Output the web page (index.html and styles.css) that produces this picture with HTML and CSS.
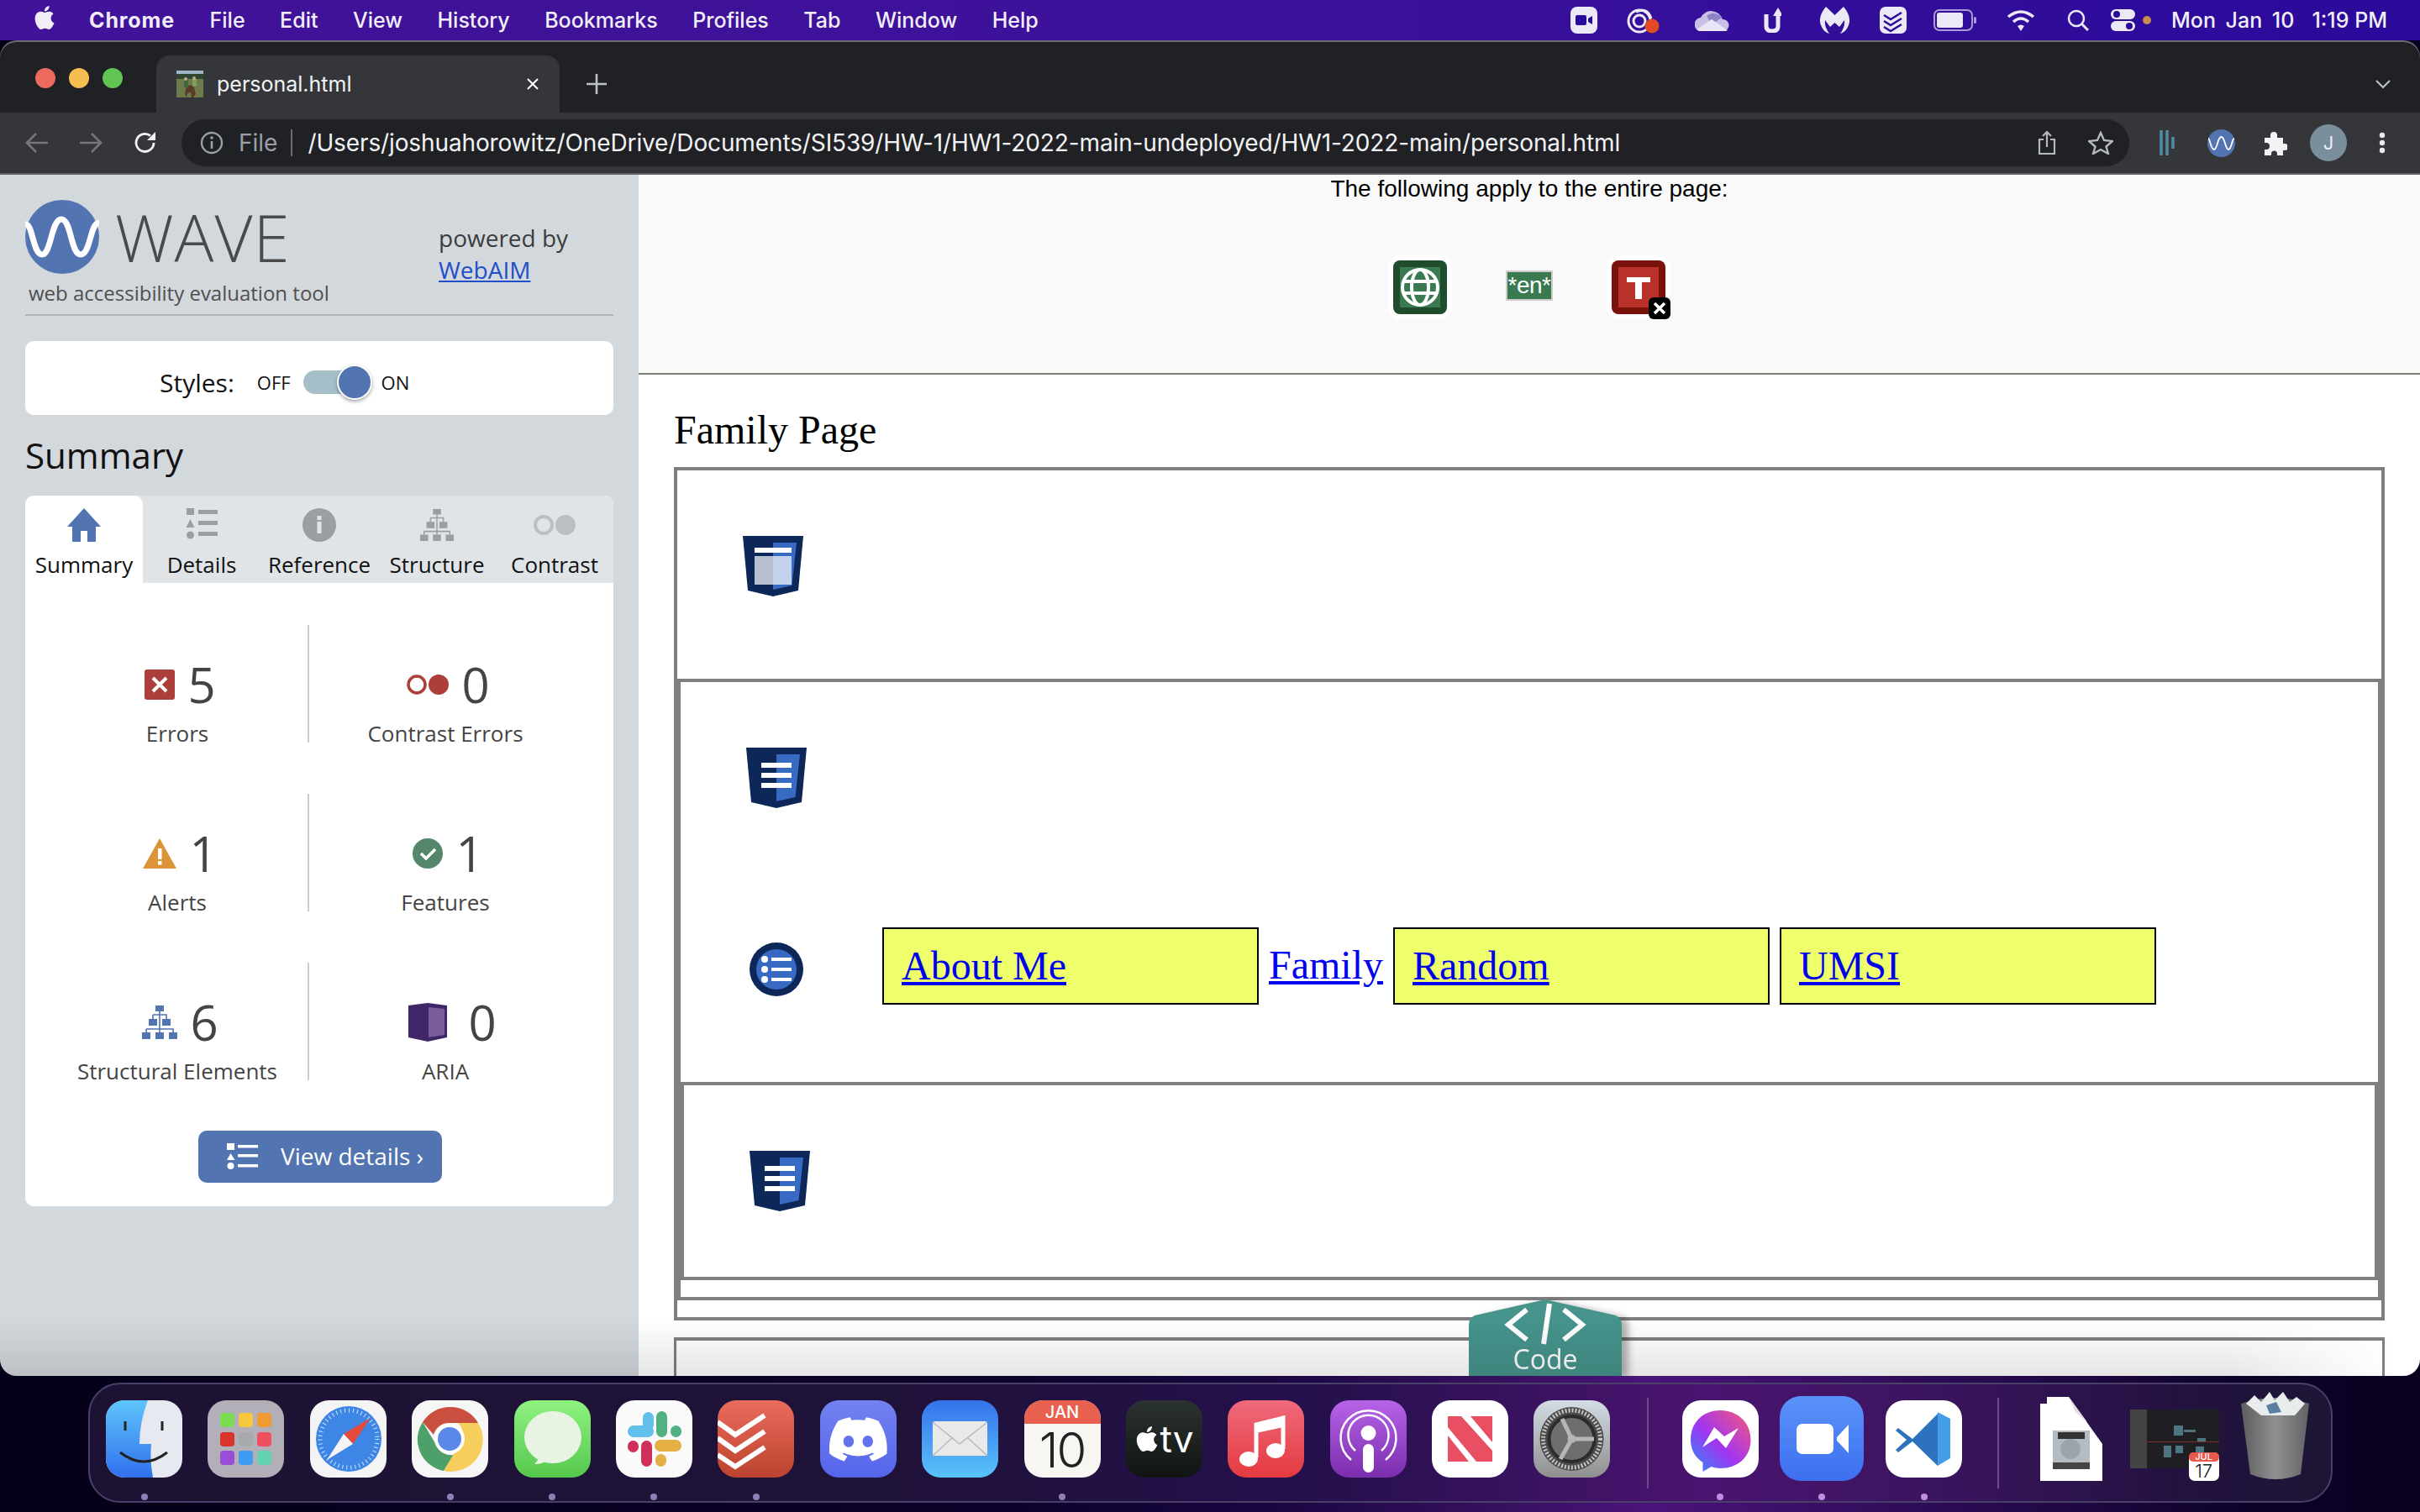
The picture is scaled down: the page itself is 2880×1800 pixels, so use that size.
FILE: index.html
```html
<!DOCTYPE html>
<html lang="en">
<head>
<meta charset="utf-8">
<title>personal.html</title>
<link rel="stylesheet" href="styles.css">
</head>
<body>
<header class="menubar">
  <svg class="m-apple" viewBox="0 0 24 24"><path fill="#f2eef8" d="M12.152 6.896c-.948 0-2.415-1.078-3.96-1.04-2.04.027-3.91 1.183-4.961 3.014-2.117 3.675-.546 9.103 1.519 12.09 1.013 1.454 2.208 3.09 3.792 3.039 1.52-.065 2.09-.987 3.935-.987 1.831 0 2.35.987 3.96.948 1.637-.026 2.676-1.48 3.676-2.948 1.156-1.688 1.636-3.325 1.662-3.415-.039-.013-3.182-1.221-3.22-4.857-.026-3.04 2.48-4.494 2.597-4.559-1.429-2.09-3.623-2.324-4.39-2.376-2-.156-3.675 1.09-4.61 1.09zM15.53 3.83c.843-1.012 1.4-2.427 1.245-3.83-1.207.052-2.662.805-3.532 1.818-.78.896-1.454 2.338-1.273 3.714 1.338.104 2.715-.688 3.559-1.701"/></svg>
  <nav class="m-left">
    <b class="m-app">Chrome</b><span>File</span><span>Edit</span><span>View</span><span>History</span><span>Bookmarks</span><span>Profiles</span><span>Tab</span><span>Window</span><span>Help</span>
  </nav>
  <div class="m-right">
    <svg class="mi mi-zoom" viewBox="0 0 32 32"><rect width="32" height="32" y="0" rx="8" fill="#ece9f7"/><rect x="6" y="10" width="13" height="12" rx="2" fill="#2a0a9a"/><path d="M21 14l5-3v10l-5-3z" fill="#2a0a9a"/></svg>
    <svg class="mi mi-cc" viewBox="0 0 40 32"><g fill="none" stroke="#ece9f7" stroke-width="3"><circle cx="16" cy="17" r="13"/><circle cx="16" cy="17" r="7"/><path d="M12 6q14-6 18 8"/></g><circle cx="31" cy="23" r="8.500" fill="#e24a25"/></svg>
    <svg class="mi mi-cloud" viewBox="0 0 41 26"><path d="M8 26a8 8 0 0 1-1-16 14 14 0 0 1 26 2 7 7 0 0 1 1 14z" fill="#c7bfe8"/><path d="M14 8a12 12 0 0 1 18 2L20 18z" fill="#8f82c8"/><path d="M2 24L20 12l19 13-2 1H5z" fill="#e9e6f6"/></svg>
    <svg class="mi mi-up" viewBox="0 0 21 30"><path d="M3 8v14q0 6 7 6t7-6V10" fill="none" stroke="#ece9f7" stroke-width="5"/><path d="M17 0l-6 10h12z" fill="#ece9f7"/></svg>
    <svg class="mi mi-mb" viewBox="0 0 37 32"><path d="M18.500 10L8 0Q-2 12 2 22q3 8 10 10-6-8-5-16l6 8 5.500-5 5.500 5 6-8q1 8-5 16 7-2 10-10Q39 12 29 0z" fill="#ece9f7"/></svg>
    <svg class="mi mi-td" viewBox="0 0 32 32"><rect width="32" height="32" rx="7" fill="#ece9f7"/><path d="M5 10l8 5 13-8M5 17l8 5 13-8M5 24l8 5 13-8" fill="none" stroke="#2a0a9a" stroke-width="2.500"/></svg>
    <svg class="mi mi-bat" viewBox="0 0 51 26"><rect x="1" y="1" width="45" height="24" rx="6" fill="none" stroke="#a99bd8" stroke-width="2"/><rect x="4" y="4" width="31" height="18" rx="3" fill="#ece9f7"/><rect x="48" y="9" width="3" height="8" rx="1.500" fill="#a99bd8"/></svg>
    <svg class="mi mi-wifi" viewBox="0 0 34 26"><g fill="none" stroke="#ece9f7" stroke-width="3.500"><path d="M2 9q15-12 30 0"/><path d="M8 15q9-8 18 0"/></g><path d="M13 20q4-3 8 0l-4 6z" fill="#ece9f7"/></svg>
    <svg class="mi mi-search" viewBox="0 0 26 26"><circle cx="11" cy="11" r="9" fill="none" stroke="#ece9f7" stroke-width="2.500"/><path d="M17 17l8 8" stroke="#ece9f7" stroke-width="3"/></svg>
    <svg class="mi mi-ctl" viewBox="0 0 29 26"><rect width="29" height="12" rx="6" fill="#ece9f7"/><circle cx="7" cy="6" r="4" fill="#2a0a9a"/><rect y="14" width="29" height="12" rx="6" fill="#ece9f7"/><circle cx="22" cy="20" r="4" fill="#2a0a9a"/></svg>
    <i class="m-dot"></i>
    <span class="m-date">Mon Jan 10</span><span class="m-time">1:19 PM</span>
  </div>
</header>

<div class="window">
  <div class="tabstrip">
    <div class="lights"><i class="l-red"></i><i class="l-yellow"></i><i class="l-green"></i></div>
    <div class="tab">
      <svg class="favicon" viewBox="0 0 32 32"><rect width="32" height="32" fill="#6c7a4c"/><rect width="32" height="5" fill="#9fb6c8"/><rect y="4" width="32" height="6" fill="#2f4630"/><path d="M10 28l2-10 8-1 3 11-3 4h-2l-1-6-4 1-1 5z" fill="#5a3a28"/><rect x="9" y="11" width="5" height="9" fill="#3e6a3a"/><rect x="19" y="10" width="5" height="9" fill="#7ea05a"/><circle cx="11" cy="10" r="2" fill="#c9a888"/><circle cx="21" cy="9" r="2" fill="#c9a888"/></svg>
      <span class="tab-title">personal.html</span>
      <svg class="tab-x" viewBox="0 0 16 16"><path d="M2 2l12 12M14 2L2 14" stroke="#fff" stroke-width="2"/></svg>
    </div>
    <svg class="newtab" viewBox="0 0 24 24"><path d="M12 0v24M0 12h24" stroke="#bdc1c6" stroke-width="2.600"/></svg>
    <svg class="chev" viewBox="0 0 20 12"><path d="M2 2l8 8 8-8" fill="none" stroke="#bdc1c6" stroke-width="2.200"/></svg>
  </div>
  <div class="toolbar">
    <svg class="tb tb-nav" viewBox="0 0 28 26"><path d="M27 13H3M13 2L2 13l11 11" fill="none" stroke="#75777b" stroke-width="2.600"/></svg>
    <svg class="tb tb-nav tb-fwd" viewBox="0 0 28 26"><path d="M1 13h24M15 2l11 11-11 11" fill="none" stroke="#75777b" stroke-width="2.600"/></svg>
    <svg class="tb tb-reload" viewBox="0 0 28 28"><path d="M24 14a10.500 10.500 0 1 1-4-8.300" fill="none" stroke="#f1f3f4" stroke-width="2.800"/><path d="M26 1v10H16z" fill="#f1f3f4"/></svg>
    <div class="omni">
      <svg class="o-info" viewBox="0 0 28 28"><circle cx="14" cy="14" r="12" fill="none" stroke="#9aa0a6" stroke-width="2.400"/><path d="M14 12v9" stroke="#9aa0a6" stroke-width="2.600"/><circle cx="14" cy="8" r="1.800" fill="#9aa0a6"/></svg>
      <span class="o-file">File</span>
      <i class="o-sep"></i>
      <span class="o-url">/Users/joshuahorowitz/OneDrive/Documents/SI539/HW-1/HW1-2022-main-undeployed/HW1-2022-main/personal.html</span>
      <svg class="o-share" viewBox="0 0 22 30"><path d="M7 11H2v17h18V11h-5M11 20V2M6 7l5-5 5 5" fill="none" stroke="#b5b8bc" stroke-width="2.200"/></svg>
      <svg class="o-star" viewBox="0 0 30 28"><path d="M15 2l4 9 10 1-7.500 6.500L24 27l-9-5-9 5 2.500-8.500L1 12l10-1z" fill="none" stroke="#b5b8bc" stroke-width="2.400"/></svg>
    </div>
    <svg class="t-dash" viewBox="0 0 21 30"><path d="M3 0v30M10 0v30M17 8v14" stroke="#4e8da0" stroke-width="3.500"/></svg>
    <svg class="t-wave" viewBox="0 0 33 33"><circle cx="16.500" cy="16.500" r="16.500" fill="#5274b1"/><path d="M1 11C3 11 4 24 8 24S12 9 16.500 9 21 24 25 24 29 11 32 11" fill="none" stroke="#fff" stroke-width="1.800"/></svg>
    <svg class="t-puzzle" viewBox="0 0 29 29"><path d="M2 8h7V5a4 4 0 0 1 8 0v3h7v7h2a4 4 0 0 1 0 8h-2v6h-7v-2a3.500 3.500 0 0 0-7 0v2H2v-7h2a4 4 0 0 0 0-8H2z" fill="#f1f3f4"/></svg>
    <div class="avatar">J</div>
    <svg class="t-dots" viewBox="0 0 8 26"><circle cx="4" cy="4" r="3.200" fill="#e8eaed"/><circle cx="4" cy="13" r="3.200" fill="#e8eaed"/><circle cx="4" cy="22" r="3.200" fill="#e8eaed"/></svg>
  </div>

  <div class="content">
    <aside class="wave">
      <div class="w-head">
        <div class="w-brand">
          <div class="w-logo">
            <svg class="w-circle" viewBox="0 0 88 88"><circle cx="44" cy="44" r="44" fill="#5274b1"/><path d="M0 29C9 27 9 65 20 65S31 23 43 23 54 65 66 65 77 27 88 27" fill="none" stroke="#fff" stroke-width="7"/></svg>
            <span class="w-name">WAVE</span>
          </div>
          <div class="w-tag">web accessibility evaluation tool</div>
        </div>
        <div class="w-power">powered by<br><a href="#">WebAIM</a></div>
      </div>
      <div class="w-styles">
        <span class="st-label">Styles:</span>
        <span class="st-opt">OFF</span>
        <span class="st-toggle"><i></i></span>
        <span class="st-opt">ON</span>
      </div>
      <h2 class="w-h2">Summary</h2>
      <div class="panel">
        <div class="tabs">
          <div class="wt wt-active">
            <svg viewBox="0 0 40 40"><path d="M20 0L0 22h6v18h10V27h8v13h10V22h6z" fill="#5274b1"/></svg>
            <span>Summary</span>
          </div>
          <div class="wt">
            <svg viewBox="0 0 40 40"><g fill="#9c9fa1"><rect x="2" y="0" width="9" height="8"/><path d="M6.500 13l5 10h-10z"/><circle cx="6.500" cy="32" r="4.500"/><rect x="16" y="2" width="23" height="5"/><rect x="16" y="15" width="23" height="5"/><rect x="16" y="28" width="23" height="5"/></g></svg>
            <span>Details</span>
          </div>
          <div class="wt">
            <svg viewBox="0 0 40 40"><circle cx="20" cy="20" r="20" fill="#9c9fa1"/><rect x="17.500" y="16" width="5" height="14" fill="#e0e4e7"/><rect x="17.500" y="9" width="5" height="5" fill="#e0e4e7"/></svg>
            <span>Reference</span>
          </div>
          <div class="wt">
            <svg viewBox="0 0 42 40"><use href="#tree" fill="#9c9fa1" stroke="#9c9fa1"/></svg>
            <span>Structure</span>
          </div>
          <div class="wt">
            <svg class="wt-wide" viewBox="0 0 50 40"><circle cx="12" cy="20" r="10" fill="none" stroke="#bcbfc2" stroke-width="4"/><circle cx="38" cy="20" r="12" fill="#bcbfc2"/></svg>
            <span>Contrast</span>
          </div>
        </div>
        <svg class="defs" width="0" height="0"><defs><g id="tree"><rect x="16" y="0" width="10" height="7" stroke="none"/><rect x="8" y="16" width="10" height="8" stroke="none"/><rect x="24" y="16" width="10" height="8" stroke="none"/><rect x="0" y="32" width="10" height="8" stroke="none"/><rect x="16" y="32" width="10" height="8" stroke="none"/><rect x="32" y="32" width="10" height="8" stroke="none"/><path d="M21 7v26M13 11h16v5M13 11v5M5 28h32v4M5 28v4" fill="none" stroke-width="1.600"/></g></defs></svg>
        <div class="stats">
          <div class="stat">
            <div class="s-top"><svg class="si-36" viewBox="0 0 36 36"><rect width="36" height="36" rx="3" fill="#ac3f3a"/><path d="M10 10l16 16M26 10L10 26" stroke="#fff" stroke-width="4"/></svg><span class="s-num">5</span></div>
            <div class="s-label">Errors</div>
          </div>
          <div class="stat">
            <div class="s-top"><svg class="si-contrast" viewBox="0 0 50 24"><circle cx="12" cy="12" r="10" fill="none" stroke="#ac3f3a" stroke-width="3.500"/><circle cx="38" cy="12" r="12" fill="#ac3f3a"/></svg><span class="s-num">0</span></div>
            <div class="s-label">Contrast Errors</div>
          </div>
          <div class="stat">
            <div class="s-top"><svg class="si-alert" viewBox="0 0 40 36"><path d="M20 0l20 36H0z" fill="#dc9438"/><rect x="18" y="12" width="4.500" height="13" fill="#fff"/><rect x="18" y="27" width="4.500" height="4.500" fill="#fff"/></svg><span class="s-num">1</span></div>
            <div class="s-label">Alerts</div>
          </div>
          <div class="stat">
            <div class="s-top"><svg class="si-36" viewBox="0 0 36 36"><circle cx="18" cy="18" r="18" fill="#53866a"/><path d="M10 18l6 6 11-11" fill="none" stroke="#fff" stroke-width="3.500"/></svg><span class="s-num">1</span></div>
            <div class="s-label">Features</div>
          </div>
          <div class="stat">
            <div class="s-top"><svg class="si-tree" viewBox="0 0 42 40"><use href="#tree" fill="#5274b1" stroke="#5274b1"/></svg><span class="s-num">6</span></div>
            <div class="s-label">Structural Elements</div>
          </div>
          <div class="stat">
            <div class="s-top"><svg class="si-aria" viewBox="0 0 46 46"><path d="M0 3l23-3 23 3v38l-23 5L0 41z" fill="#3f2668"/><path d="M24 5l19 2v31l-19 3z" fill="#7a5c9a"/></svg><span class="s-num">0</span></div>
            <div class="s-label">ARIA</div>
          </div>
        </div>
        <a class="details-btn" href="#">
          <svg viewBox="0 0 37 31"><g fill="#fff"><rect x="0" y="0" width="9" height="8"/><path d="M4.500 12l5 8H0z"/><circle cx="4.500" cy="27" r="4"/><rect x="13" y="2" width="24" height="3.500"/><rect x="13" y="13" width="24" height="3.500"/><rect x="13" y="25" width="24" height="3.500"/></g></svg>
          <span>View details ›</span>
        </a>
      </div>
    </aside>

    <main class="page">
      <section class="doc-panel">
        <p class="doc-text">The following apply to the entire page:</p>
        <div class="doc-icons">
          <span class="di-wrap">
            <svg viewBox="0 0 76 76"><rect width="76" height="76" rx="14" fill="#fff"/><rect x="6" y="6" width="64" height="64" rx="8" fill="#1f4d2b"/><rect x="14" y="14" width="48" height="48" fill="#3a7a50"/><g fill="none" stroke="#fff" stroke-width="4"><circle cx="38" cy="38" r="21"/><ellipse cx="38" cy="38" rx="10" ry="21"/><path d="M18 31h40M18 45h40"/></g></svg>
          </span>
          <span class="di-en">*en*</span>
          <span class="di-wrap">
            <svg viewBox="0 0 76 76"><rect width="76" height="76" rx="14" fill="#fff"/><rect x="6" y="6" width="64" height="64" rx="8" fill="#7a120c"/><rect x="14" y="14" width="48" height="48" fill="#b8322a"/><path d="M24 26h28v6H42v20h-8V32H24z" fill="#fff"/><rect x="50" y="50" width="26" height="26" rx="6" fill="#000"/><path d="M57 57l12 12M69 57L57 69" stroke="#fff" stroke-width="3.500"/></svg>
          </span>
        </div>
      </section>
      <div class="doc">
        <h1 class="doc-h1">Family Page</h1>
        <div class="box box-1">
          <svg class="wi wi-a" viewBox="0 0 72 72"><use href="#shield"/><rect x="14" y="14" width="44" height="6" fill="#fff"/><rect x="14" y="24" width="22" height="34" fill="#b6c0d0"/><rect x="36" y="24" width="22" height="34" fill="#c3d3ee"/></svg>
          <svg class="defs" width="0" height="0"><defs><g id="shield"><path d="M0 0h72l-6 65-30 7-30-7z" fill="#0d2759"/><path d="M36 8h28l-5.500 51L36 64z" fill="#3869c3"/></g><g id="bars" fill="#fff"><rect x="18" y="18" width="36" height="6"/><rect x="18" y="30" width="36" height="6"/><rect x="18" y="42" width="36" height="6"/></g></defs></svg>
          <div class="box box-2">
            <svg class="wi wi-b" viewBox="0 0 72 72"><use href="#shield"/><use href="#bars"/></svg>
            <svg class="wi wi-c" viewBox="0 0 64 64"><circle cx="32" cy="32" r="32" fill="#0d2759"/><circle cx="32" cy="32" r="24" fill="#3869c3"/><g fill="#fff"><circle cx="18" cy="20" r="4"/><circle cx="18" cy="32" r="4"/><circle cx="18" cy="44" r="4"/><rect x="26" y="18" width="24" height="4"/><rect x="26" y="30" width="24" height="4"/><rect x="26" y="42" width="24" height="4"/></g></svg>
            <nav class="site-nav">
              <a class="nl nl-box" href="#">About Me</a>
              <a class="nl nl-plain" href="#">Family</a>
              <a class="nl nl-box" href="#">Random</a>
              <a class="nl nl-box" href="#">UMSI</a>
            </nav>
            <div class="box box-3">
              <svg class="wi wi-d" viewBox="0 0 72 72"><use href="#shield"/><use href="#bars"/></svg>
            </div>
          </div>
        </div>
        <div class="box box-next"></div>
      </div>
      <div class="code-tab">
        <svg class="code-bg" viewBox="0 0 182 91" preserveAspectRatio="none"><path d="M91 0l84 19q7 3 7 12v60H0V31q0-9 7-12z" fill="#46948c"/></svg>
        <svg class="code-ic" viewBox="0 0 100 50"><path d="M28 8L6 26l22 18M72 8l22 18-22 18" fill="none" stroke="#fff" stroke-width="6"/><path d="M55 1l-7 48" stroke="#fff" stroke-width="6"/></svg>
        <span class="code-lab">Code</span>
      </div>
    </main>
    <div class="vignette"></div>
  </div>
</div>

<footer class="dock">
  <div class="di">
    <svg viewBox="0 0 91 92"><defs><linearGradient id="g-f" x1="0" y1="0" x2="0" y2="1"><stop offset="0" stop-color="#5fc4fb"/><stop offset="1" stop-color="#3070ee"/></linearGradient><clipPath id="c-s"><rect width="91" height="92" rx="22"/></clipPath></defs><g clip-path="url(#c-s)"><rect width="91" height="92" fill="#e6eaf0"/><path d="M0 0h50q-10 26-10 52h14q-2 18 2 40H0z" fill="url(#g-f)"/><path d="M23 25v11M67 25v11" stroke="#222" stroke-width="3"/><path d="M17 62q28 22 56 0" fill="none" stroke="#222" stroke-width="3"/></g></svg><i class="dd"></i>
  </div>
  <div class="di">
    <svg viewBox="0 0 91 92"><rect width="91" height="92" rx="22" fill="#b2afb8"/><rect x="15" y="15" width="17" height="17" rx="4" fill="#7bdc52"/><rect x="37" y="15" width="17" height="17" rx="4" fill="#f7c83f"/><rect x="59" y="15" width="17" height="17" rx="4" fill="#f09a32"/><rect x="15" y="38" width="17" height="17" rx="4" fill="#d8342a"/><rect x="37" y="38" width="17" height="17" rx="4" fill="#a7aaab"/><rect x="59" y="38" width="17" height="17" rx="4" fill="#ee5060"/><rect x="15" y="60" width="17" height="17" rx="4" fill="#9a4ed8"/><rect x="37" y="60" width="17" height="17" rx="4" fill="#3f9cf2"/><rect x="59" y="60" width="17" height="17" rx="4" fill="#63d3b0"/></svg><i class="dd dd-none"></i>
  </div>
  <div class="di">
    <svg viewBox="0 0 91 92"><rect width="91" height="92" rx="22" fill="#f4f4f4"/><circle cx="46" cy="46" r="39" fill="#3d86e6"/><circle cx="46" cy="46" r="34" fill="none" stroke="#cfe3fa" stroke-width="5" stroke-dasharray="1 4"/><path d="M72 21L40 40l11 12z" fill="#e5493c"/><path d="M20 71l20-31 11 12z" fill="#f4f4f4"/></svg><i class="dd dd-none"></i>
  </div>
  <div class="di">
    <svg viewBox="0 0 91 92"><rect width="91" height="92" rx="22" fill="#f6f6f6"/><path d="M46 8a38 38 0 0 1 33 19H44a19 19 0 0 0-18 14L13 26A38 38 0 0 1 46 8z" fill="#c9503f"/><path d="M13 26l19 32a19 19 0 0 0 18 7L38 84A38 38 0 0 1 13 26z" fill="#4ea06a"/><path d="M79 27a38 38 0 0 1-41 57l19-32a19 19 0 0 0-2-25z" fill="#f6ce5c"/><circle cx="45" cy="46" r="18" fill="#fff"/><circle cx="45" cy="46" r="14" fill="#5a88e8"/></svg><i class="dd"></i>
  </div>
  <div class="di">
    <svg viewBox="0 0 91 92"><defs><linearGradient id="g-m" x1="0" y1="0" x2="0" y2="1"><stop offset="0" stop-color="#8ef27f"/><stop offset="1" stop-color="#56c84e"/></linearGradient></defs><rect width="91" height="92" rx="22" fill="url(#g-m)"/><ellipse cx="46" cy="44" rx="34" ry="31" fill="#e9f3e4"/><path d="M30 68q-3 5-6 8 10 0 16-5z" fill="#e9f3e4"/></svg><i class="dd"></i>
  </div>
  <div class="di">
    <svg viewBox="0 0 91 92"><rect width="91" height="92" rx="22" fill="#fafafa"/><rect x="32" y="14" width="13" height="22" rx="6.500" fill="#62c1ea"/><rect x="14" y="30" width="31" height="14" rx="7" fill="#62c1ea"/><rect x="48" y="13" width="13" height="31" rx="6.500" fill="#52b183"/><rect x="65" y="30" width="13" height="14" rx="6.500" fill="#52b183"/><rect x="46" y="47" width="32" height="14" rx="7" fill="#e4b044"/><rect x="47" y="64" width="13" height="15" rx="6.500" fill="#e4b044"/><rect x="30" y="48" width="13" height="31" rx="6.500" fill="#cf2f5b"/><rect x="14" y="48" width="13" height="14" rx="6.500" fill="#cf2f5b"/></svg><i class="dd"></i>
  </div>
  <div class="di">
    <svg viewBox="0 0 91 92"><defs><linearGradient id="g-t" x1="0" y1="0" x2="0" y2="1"><stop offset="0" stop-color="#e96b5c"/><stop offset="1" stop-color="#bb432f"/></linearGradient></defs><rect width="91" height="92" rx="22" fill="url(#g-t)"/><path d="M0 26l21 15 35-23M0 45l21 15 35-23M0 65l21 14 35-23" fill="none" stroke="#fff" stroke-width="6"/></svg><i class="dd"></i>
  </div>
  <div class="di">
    <svg viewBox="0 0 91 92"><defs><linearGradient id="g-d" x1="0" y1="0" x2="0" y2="1"><stop offset="0" stop-color="#7382f0"/><stop offset="1" stop-color="#5565ea"/></linearGradient></defs><rect width="91" height="92" rx="22" fill="url(#g-d)"/><path transform="translate(11 12) scale(2.860)" fill="#fff" d="M20.317 4.3698a19.7913 19.7913 0 00-4.8851-1.5152.0741.0741 0 00-.0785.0371c-.211.3753-.4447.8648-.6083 1.2495-1.8447-.2762-3.68-.2762-5.4868 0-.1636-.3933-.4058-.8742-.6177-1.2495a.077.077 0 00-.0785-.037 19.7363 19.7363 0 00-4.8852 1.515.0699.0699 0 00-.0321.0277C.5334 9.0458-.319 13.5799.0992 18.0578a.0824.0824 0 00.0312.0561c2.0528 1.5076 4.0413 2.4228 5.9929 3.0294a.0777.0777 0 00.0842-.0276c.4616-.6304.8731-1.2952 1.226-1.9942a.076.076 0 00-.0416-.1057c-.6528-.2476-1.2743-.5495-1.8722-.8923a.077.077 0 01-.0076-.1277c.1258-.0943.2517-.1923.3718-.2914a.0743.0743 0 01.0776-.0105c3.9278 1.7933 8.18 1.7933 12.0614 0a.0739.0739 0 01.0785.0095c.1202.099.246.1981.3728.2924a.077.077 0 01-.0066.1276 12.2986 12.2986 0 01-1.873.8914.0766.0766 0 00-.0407.1067c.3604.698.7719 1.3628 1.225 1.9932a.076.076 0 00.0842.0286c1.961-.6067 3.9495-1.5219 6.0023-3.0294a.077.077 0 00.0313-.0552c.5004-5.177-.8382-9.6739-3.5485-13.6604a.061.061 0 00-.0312-.0286zM8.02 15.3312c-1.1825 0-2.1569-1.0857-2.1569-2.419 0-1.3332.9555-2.4189 2.157-2.4189 1.2108 0 2.1757 1.0952 2.1568 2.419 0 1.3332-.9555 2.4189-2.1569 2.4189zm7.9748 0c-1.1825 0-2.1569-1.0857-2.1569-2.419 0-1.3332.9554-2.4189 2.1569-2.4189 1.2108 0 2.1757 1.0952 2.1568 2.419 0 1.3332-.946 2.4189-2.1568 2.4189Z"/></svg><i class="dd dd-none"></i>
  </div>
  <div class="di">
    <svg viewBox="0 0 91 92"><defs><linearGradient id="g-ma" x1="0" y1="0" x2="0" y2="1"><stop offset="0" stop-color="#3572ea"/><stop offset="1" stop-color="#5ac3fa"/></linearGradient></defs><rect width="91" height="92" rx="22" fill="url(#g-ma)"/><rect x="13" y="25" width="65" height="41" rx="3" fill="#e9e9e9"/><path d="M13 26l32 26 33-26M13 66l24-22M78 66L54 44" fill="none" stroke="#b9b9b9" stroke-width="1.500"/></svg><i class="dd dd-none"></i>
  </div>
  <div class="di di-cal">
    <div class="cal"><span class="cal-m">JAN</span><span class="cal-d">10</span></div><i class="dd"></i>
  </div>
  <div class="di di-tv">
    <div class="tv"><svg viewBox="0 0 24 24"><path fill="#fff" d="M12.152 6.896c-.948 0-2.415-1.078-3.96-1.04-2.04.027-3.91 1.183-4.961 3.014-2.117 3.675-.546 9.103 1.519 12.09 1.013 1.454 2.208 3.09 3.792 3.039 1.52-.065 2.09-.987 3.935-.987 1.831 0 2.35.987 3.96.948 1.637-.026 2.676-1.48 3.676-2.948 1.156-1.688 1.636-3.325 1.662-3.415-.039-.013-3.182-1.221-3.22-4.857-.026-3.04 2.48-4.494 2.597-4.559-1.429-2.09-3.623-2.324-4.39-2.376-2-.156-3.675 1.09-4.61 1.09zM15.53 3.83c.843-1.012 1.4-2.427 1.245-3.83-1.207.052-2.662.805-3.532 1.818-.78.896-1.454 2.338-1.273 3.714 1.338.104 2.715-.688 3.559-1.701"/></svg><span>tv</span></div><i class="dd dd-none"></i>
  </div>
  <div class="di">
    <svg viewBox="0 0 91 92"><defs><linearGradient id="g-mu" x1="0" y1="0" x2="0" y2="1"><stop offset="0" stop-color="#ee6a7c"/><stop offset="1" stop-color="#e53a3f"/></linearGradient></defs><rect width="91" height="92" rx="22" fill="url(#g-mu)"/><path d="M34 68V29l32-8v37" fill="none" stroke="#fff" stroke-width="5"/><path d="M34 30l32-8v10l-32 7z" fill="#fff"/><ellipse cx="25" cy="70" rx="11" ry="9" fill="#fff"/><ellipse cx="57" cy="60" rx="11" ry="9" fill="#fff"/></svg><i class="dd dd-none"></i>
  </div>
  <div class="di">
    <svg viewBox="0 0 91 92"><defs><linearGradient id="g-p" x1="0" y1="0" x2="0" y2="1"><stop offset="0" stop-color="#b763e8"/><stop offset="1" stop-color="#7a2dad"/></linearGradient></defs><rect width="91" height="92" rx="22" fill="url(#g-p)"/><g fill="none" stroke="#fff" stroke-width="2.500"><path d="M25 71a33 33 0 1 1 41 0"/><path d="M30 60a24 24 0 1 1 31 0"/></g><circle cx="45.500" cy="39" r="9" fill="#fff"/><rect x="39" y="52" width="13" height="34" rx="6.500" fill="#fff"/></svg><i class="dd dd-none"></i>
  </div>
  <div class="di">
    <svg viewBox="0 0 91 92"><rect width="91" height="92" rx="22" fill="#fff"/><g fill="#e94f62"><path d="M19 19h16l37 41v13H53L19 32z"/><path d="M19 42l25 31H19z"/><path d="M46 19h26v31z"/></g></svg><i class="dd dd-none"></i>
  </div>
  <div class="di">
    <svg viewBox="0 0 91 92"><defs><linearGradient id="g-s" x1="0" y1="0" x2="0" y2="1"><stop offset="0" stop-color="#d3dde5"/><stop offset="1" stop-color="#8f8f8f"/></linearGradient></defs><rect width="91" height="92" rx="22" fill="url(#g-s)"/><circle cx="45.500" cy="46" r="38" fill="#4a4a4a"/><circle cx="45.500" cy="46" r="34" fill="none" stroke="#c4c4c4" stroke-width="5" stroke-dasharray="2 2"/><circle cx="45.500" cy="46" r="27" fill="#6e6e6e" stroke="#2c2c2c" stroke-width="4"/><path d="M45.500 46L34 22M45.500 46L72 46M45.500 46L32 70" stroke="#b5b5b5" stroke-width="5"/><circle cx="45.500" cy="46" r="5" fill="#b5b5b5"/></svg><i class="dd dd-none"></i>
  </div>
  <i class="dock-sep dock-sep-a"></i>
  <div class="di">
    <svg viewBox="0 0 91 92"><defs><linearGradient id="g-ms" x1="0" y1="1" x2="1" y2="0"><stop offset="0" stop-color="#2b8cf7"/><stop offset=".45" stop-color="#a035f0"/><stop offset="1" stop-color="#f9597a"/></linearGradient></defs><rect width="91" height="92" rx="22" fill="#fff"/><path d="M45.500 12c20 0 36 14 36 35s-16 34-36 34q-6 0-11-2l-10 6v-11C15 68 10 58 10 47c0-21 15-35 35.500-35z" fill="url(#g-ms)"/><path d="M24 56l14-24 12 11 17-10-15 24-11-12z" fill="#fff"/></svg><i class="dd dd-lit"></i>
  </div>
  <div class="di di-big">
    <svg viewBox="0 0 100 101"><defs><linearGradient id="g-z" x1="0" y1="0" x2="0" y2="1"><stop offset="0" stop-color="#5a92fa"/><stop offset="1" stop-color="#3d6fef"/></linearGradient></defs><rect width="100" height="101" rx="25" fill="url(#g-z)"/><rect x="20" y="33" width="44" height="36" rx="7" fill="#fff"/><path d="M68 49l14-15v34L68 53z" fill="#fff"/></svg><i class="dd dd-lit dd-big"></i>
  </div>
  <div class="di">
    <svg viewBox="0 0 91 92"><rect width="91" height="92" rx="22" fill="#fff"/><path d="M62 16L32 46 15 33l-3 3 13 11-13 12 3 3 17-13 30 29z" fill="#2d72be"/><path d="M62 14l15 8v47l-15 9z" fill="#449de8"/></svg><i class="dd dd-lit"></i>
  </div>
  <i class="dock-sep dock-sep-b"></i>
  <div class="di di-doc">
    <svg viewBox="0 0 74 106"><path d="M8 6h26l40 56v44H0V14h8z" fill="#fff"/><path d="M34 6l8 18 14 12 -22-30z" fill="#ddd"/><rect x="15" y="46" width="44" height="46" fill="#b4bcc2"/><rect x="21" y="48" width="32" height="8" fill="#333"/><circle cx="36" cy="68" r="12" fill="#9aa4aa"/><rect x="15" y="84" width="44" height="8" fill="#444"/></svg>
  </div>
  <div class="di di-thumb">
    <svg viewBox="0 0 106 106"><rect y="21" width="106" height="70" fill="#1f1f23"/><rect y="21" width="20" height="70" fill="#444"/><g fill="#4d7682"><rect x="52" y="40" width="11" height="12"/><rect x="64" y="45" width="14" height="3"/><rect x="80" y="55" width="10" height="5"/><rect x="40" y="64" width="9" height="14"/><rect x="54" y="64" width="9" height="9"/><rect x="78" y="65" width="10" height="8"/></g><rect x="20" y="59" width="86" height="1" fill="#733"/><rect x="70" y="72" width="36" height="34" rx="7" fill="#fff"/><rect x="70" y="72" width="36" height="11" rx="5" fill="#e9584c"/></svg>
    <span class="thumb-m">JUL</span><span class="thumb-d">17</span>
  </div>
  <div class="di di-trash">
    <svg viewBox="0 0 81 106"><defs><linearGradient id="g-tr" x1="0" y1="0" x2="1" y2="0"><stop offset="0" stop-color="#5d5d5e"/><stop offset=".5" stop-color="#8e8f90"/><stop offset="1" stop-color="#636365"/></linearGradient></defs><path d="M0 14q40-14 81 0l-10 84q-30 12-60 0z" fill="url(#g-tr)"/><path d="M6 14L16 4l8 8 10-12 6 10 10-10 8 12 8-6 10 8-12 14-40 0z" fill="#e9ecec"/><path d="M30 16l12-4 6 12-14 2z" fill="#5a7fa0"/></svg>
  </div>
</footer>
</body>
</html>
```

FILE: styles.css
```css
* { box-sizing: border-box; }
html, body { margin: 0; height: 1800px; }
body {
  width: 2880px;
  overflow: hidden;
  display: flex;
  flex-direction: column;
  background: linear-gradient(90deg, #050018 0%, #0b0128 40%, #180640 52%, #36105e 62%, #4a137a 68%, #2c0c56 80%, #0c0228 93%, #0a0020 100%);
  font-family: "Open Sans", sans-serif;
}

/* menu bar */
.menubar {
  height: 48px;
  flex: none;
  display: flex;
  align-items: center;
  padding-left: 39px;
  background: linear-gradient(90deg, #41129a, #3c1199 50%, #2a0a9b);
  color: #f2eef8;
  font: 500 25px "Inter", sans-serif;
}
.m-apple { width: 28px; height: 34px; margin-right: 39px; margin-top: -6px; }
.m-left { display: flex; align-items: center; gap: 41.5px; }
.m-app { font-weight: 700; letter-spacing: .9px; }
.m-right { margin-left: auto; display: flex; align-items: center; padding-right: 39px; }
.mi { display: block; flex: none; }
.mi-zoom { width: 32px; height: 32px; }
.mi-cc { width: 40px; height: 32px; margin-left: 34px; }
.mi-cloud { width: 41px; height: 26px; margin-left: 42px; }
.mi-up { width: 21px; height: 30px; margin-left: 41px; }
.mi-mb { width: 37px; height: 32px; margin-left: 45px; }
.mi-td { width: 32px; height: 32px; margin-left: 35px; }
.mi-bat { width: 51px; height: 26px; margin-left: 32px; }
.mi-wifi { width: 34px; height: 26px; margin-left: 36px; }
.mi-search { width: 26px; height: 26px; margin-left: 38px; }
.mi-ctl { width: 29px; height: 26px; margin-left: 26px; }
.m-dot { width: 10px; height: 10px; border-radius: 50%; background: #c78c52; margin-left: 9px; }
.m-date { margin-left: 24px; word-spacing: 5px; }
.m-time { margin-left: 21px; }

/* browser window */
.window {
  position: relative;
  height: 1590px;
  flex: none;
  display: flex;
  flex-direction: column;
  overflow: hidden;
  border-radius: 20px;
  background: #202124;
  box-shadow: inset 0 2px 0 #6a6b6e;
}
.tabstrip { height: 86px; flex: none; display: flex; align-items: flex-end; position: relative; }
.lights { position: absolute; left: 42px; top: 33px; display: flex; gap: 16px; }
.lights i { width: 24px; height: 24px; border-radius: 50%; }
.l-red { background: #ed6a5e; }
.l-yellow { background: #f5bf4f; }
.l-green { background: #61c554; }
.tab {
  margin-left: 186px;
  width: 480px;
  height: 68px;
  background: #35363a;
  border-radius: 16px 16px 0 0;
  display: flex;
  align-items: center;
  padding: 0 24px;
  color: #f1f3f4;
  font: 400 25px "Inter", sans-serif;
}
.favicon { width: 32px; height: 32px; flex: none; }
.tab-title { margin-left: 16px; }
.tab-x { width: 16px; height: 16px; margin-left: auto; }
.newtab { width: 24px; height: 24px; margin: 0 0 22px 32px; }
.chev { width: 20px; height: 12px; margin: 0 34px 28px auto; }
.toolbar {
  height: 74px;
  flex: none;
  display: flex;
  align-items: center;
  background: #35363a;
  border-bottom: 2px solid #5f6063;
}
.tb { flex: none; }
.tb-nav { width: 28px; height: 26px; margin-left: 30px; }
.tb-fwd { margin-left: 36px; }
.tb-reload { width: 28px; height: 28px; margin-left: 37px; }
.omni {
  margin-left: 29px;
  width: 2318px;
  height: 56px;
  flex: none;
  border-radius: 28px;
  background: #202124;
  display: flex;
  align-items: center;
  padding-left: 22px;
  font: 400 28px "Inter", sans-serif;
}
.o-info { width: 28px; height: 28px; flex: none; }
.o-file { margin-left: 18px; color: #9aa0a6; }
.o-sep { width: 2px; height: 32px; background: #6a6c70; margin: 0 18px 0 16px; }
.o-url { color: #f1f3f4; white-space: nowrap; letter-spacing: -.12px; }
.o-share { width: 22px; height: 30px; margin-left: auto; flex: none; }
.o-star { width: 30px; height: 28px; margin: 0 19px 0 38px; flex: none; }
.t-dash { width: 21px; height: 30px; margin-left: 35px; flex: none; }
.t-wave { width: 33px; height: 33px; margin-left: 37px; flex: none; }
.t-puzzle { width: 29px; height: 29px; margin-left: 33px; flex: none; }
.avatar {
  width: 44px; height: 44px; border-radius: 50%;
  margin-left: 27px; flex: none;
  background: #7b8e9b; color: #eef;
  display: flex; align-items: center; justify-content: center;
  font: 400 22px "Inter", sans-serif;
}
.t-dots { width: 8px; height: 26px; margin-left: 38px; flex: none; }

.content { flex: 1; min-height: 0; display: flex; position: relative; }
.vignette {
  position: absolute; left: 0; right: 0; bottom: 0; height: 70px;
  pointer-events: none;
  background: linear-gradient(180deg, rgba(0,0,0,0), rgba(0,0,0,.1));
  -webkit-mask-image: linear-gradient(90deg, #000 92%, transparent 99%);
  mask-image: linear-gradient(90deg, #000 92%, transparent 99%);
}

/* WAVE sidebar */
.wave { width: 760px; flex: none; background: #d3d8dd; padding: 0 30px; color: #111; }
.w-head { height: 168px; display: flex; border-bottom: 2px solid #aeb3b6; position: relative; }
.w-brand { width: 492px; padding-top: 30px; }
.w-logo { display: flex; align-items: center; height: 88px; }
.w-circle { width: 88px; height: 88px; flex: none; }
.w-name { font: 300 78px/88px "Open Sans", sans-serif; color: #4a4a4a; margin-left: 19px; letter-spacing: 1px; }
.w-tag { font-size: 24px; line-height: 32px; color: #4f4f4f; margin: 7px 0 0 4px; white-space: nowrap; }
.w-power { font-size: 28px; line-height: 38px; color: #3c3c3c; padding-top: 56px; }
.w-power a { color: #1f4fc9; }
.w-styles {
  margin-top: 30px;
  height: 88px;
  background: #fff;
  border-radius: 10px;
  display: flex;
  align-items: center;
  padding: 10px 0 0 160px;
}
.st-label { font-size: 30px; margin-right: 27px; }
.st-opt { font-size: 22px; }
.st-toggle { width: 82px; height: 28px; margin: 0 11px 0 15px; border-radius: 14px; background: #a5bfc9; position: relative; }
.st-toggle i {
  position: absolute; right: 0; top: -7px;
  width: 42px; height: 42px; border-radius: 50%;
  background: #5274b1; border: 2px solid #fff;
  box-shadow: 0 2px 4px rgba(0,0,0,.35);
}
.w-h2 { font-size: 42px; font-weight: 400; line-height: 57px; margin: 19px 0 20px; }
.panel { background: #fff; border-radius: 10px; height: 846px; display: flex; flex-direction: column; overflow: hidden; }
.tabs { display: grid; grid-template-columns: repeat(5, 140px); height: 104px; background: #e0e4e7; }
.wt { display: flex; flex-direction: column; align-items: center; padding-top: 15px; font-size: 26px; color: #111; line-height: 35px; }
.wt-active { background: #fff; border-radius: 10px 10px 0 0; }
.wt svg { width: 40px; height: 40px; display: block; margin-bottom: 10px; }
.wt svg.wt-wide { width: 50px; }
.defs { position: absolute; }
.stats {
  display: grid;
  grid-template-columns: 1fr 1fr;
  grid-auto-rows: 140px;
  row-gap: 61px;
  width: 632px;
  margin: 50px 0 0 26px;
}
.stat { display: flex; flex-direction: column; align-items: center; color: #444; }
.stat:nth-child(odd) { border-right: 2px solid #ccc; width: 312px; }
.s-top { display: flex; align-items: center; height: 80px; margin-top: 31px; gap: 15px; padding-left: 7px; }
.s-num { font-size: 58px; line-height: 80px; }
.s-label { font-size: 26px; line-height: 35px; margin-top: 1px; white-space: nowrap; }
.si-36 { width: 36px; height: 36px; }
.si-contrast { width: 50px; height: 24px; }
.si-alert { width: 40px; height: 36px; }
.si-tree { width: 42px; height: 40px; }
.si-aria { width: 46px; height: 46px; margin: 0 10px; }
.details-btn {
  margin: 60px 0 0 206px;
  width: 290px;
  height: 62px;
  background: #5274b1;
  border-radius: 10px;
  color: #fff;
  display: flex;
  align-items: center;
  padding: 0 0 2px 34px;
  font-size: 28px;
  text-decoration: none;
}
.details-btn svg { width: 37px; height: 31px; margin-right: 27px; }

/* page */
.page { flex: 1; min-width: 0; position: relative; overflow: hidden; background: #fff; }
.doc-panel { height: 238px; background: #f9f9f9; border-bottom: 2px solid #7a8072; display: flex; flex-direction: column; align-items: center; padding-top: 1px; }
.doc-text { margin: 0; font: 400 28px/32px "Liberation Sans", sans-serif; color: #000; }
.doc-icons { display: flex; align-items: center; gap: 64px; margin-top: 63px; }
.di-wrap { width: 76px; height: 76px; display: block; }
.di-wrap svg { width: 76px; height: 76px; display: block; }
.di-en {
  width: 56px; height: 36px; margin-top: -4px;
  background: #3a7a50; border: 2px solid #ccc; color: #fff;
  font: 400 28px/32px "Liberation Sans", sans-serif;
  text-align: center; white-space: nowrap;
  letter-spacing: -.5px;
}
.doc { padding: 0 42px; font-family: "Liberation Serif", serif; }
.doc-h1 { font: 400 48px/55px "Liberation Serif", serif; margin: 38px 0 17px; color: #000; }
.box { border: 4px solid #808080; position: relative; }
.box-1 { padding: 248px 0 20px; }
.box-2 { padding: 292px 0 20px 240px; }
.box-3 { height: 236px; margin-left: -240px; margin-top: 92px; }
.box-next { margin-top: 20px; height: 200px; border-width: 4px 3px; }
.wi { position: absolute; display: block; }
.wi-a { width: 72px; height: 72px; left: 78px; top: 78px; }
.wi-b { width: 72px; height: 72px; left: 78px; top: 78px; }
.wi-c { width: 64px; height: 64px; left: 82px; top: 310px; }
.wi-d { width: 72px; height: 72px; left: 78px; top: 78px; }
.site-nav { display: flex; align-items: center; gap: 12px; height: 92px; }
.nl { font-size: 48px; color: #00e; line-height: 55px; white-space: nowrap; }
.nl-plain { margin-bottom: 4px; }
.nl-box {
  display: block; width: 448px; height: 92px;
  border: 2px solid #000; background: #efff6b;
  padding: 16px 21px;
}
.code-tab {
  position: absolute; left: 988px; bottom: 0;
  width: 182px; height: 91px;
  display: flex; flex-direction: column; align-items: center;
  color: #fff;
  filter: drop-shadow(8px 2px 4px rgba(0,0,0,.3));
  border-bottom: 2px solid #6bb0a8;
}
.code-bg { position: absolute; inset: 0; width: 182px; height: 91px; }
.code-ic { width: 100px; height: 50px; position: relative; margin-top: 4px; flex: none; }
.code-lab { position: relative; font-size: 32px; line-height: 33px; height: 33px; }

/* dock */
.dock {
  margin: 8px 0 0 105px;
  width: 2671px;
  height: 143px;
  flex: none;
  display: flex;
  align-items: flex-start;
  padding: 19px 0 0 19px;
  border: 2px solid #4a3f68;
  border-radius: 38px;
  background: linear-gradient(90deg, #1d1233 0%, #1f1238 35%, #25104c 55%, #4a1470 72%, #3b1460 82%, #231240 93%, #1d1535 100%);
}
.di { flex: none; width: 91px; margin-right: 30.4px; display: flex; flex-direction: column; align-items: center; position: relative; }
.di > svg { width: 91px; height: 92px; display: block; flex: none; }
.dd { width: 8px; height: 8px; border-radius: 50%; background: #8f7fb8; margin-top: 19px; flex: none; }
.dd-none { visibility: hidden; }
.dd-lit { background: #c08ee0; }
.dd-big { margin-top: 15px; }
.cal { width: 91px; height: 92px; border-radius: 22px; background: #f7f6f3; display: flex; flex-direction: column; align-items: center; color: #222; font-family: "Inter", sans-serif; }
.cal-m { display: block; width: 100%; height: 28px; background: #e8604f; color: #fff; font-size: 20px; line-height: 28px; text-align: center; font-weight: 500; border-radius: 22px 22px 0 0; }
.cal-d { font-size: 58px; line-height: 62px; font-weight: 300; letter-spacing: -2px; }
.tv { width: 91px; height: 92px; border-radius: 22px; background: linear-gradient(180deg, #2b3330, #101413); display: flex; align-items: center; justify-content: center; color: #fff; font: 400 44px "Inter", sans-serif; }
.tv svg { width: 30px; height: 36px; }
.dock-sep { flex: none; width: 2px; height: 108px; background: #6a4b8c; margin-top: -3px; }
.dock-sep-a { margin: -3px 40px 0 13px; }
.dock-sep-b { margin: -3px 49px 0 11px; }
.di-big { width: 100px; margin: -5px 26px 0 -5px; }
.di-big > svg { width: 100px; height: 101px; }
.di-doc { width: 74px; margin: -10px 33px 0 0; }
.di-doc > svg { width: 74px; height: 106px; }
.di-thumb { width: 106px; margin: -10px 26px 0 0; }
.di-thumb > svg { width: 106px; height: 106px; }
.thumb-m { position: absolute; left: 70px; top: 72px; width: 36px; font: 500 11px/11px "Inter", sans-serif; color: #fff; text-align: center; }
.thumb-d { position: absolute; left: 70px; top: 83px; width: 36px; font: 300 22px/23px "Inter", sans-serif; color: #222; text-align: center; }
.di-trash { width: 81px; margin: -10px 0 0 0; }
.di-trash > svg { width: 81px; height: 106px; }
```
